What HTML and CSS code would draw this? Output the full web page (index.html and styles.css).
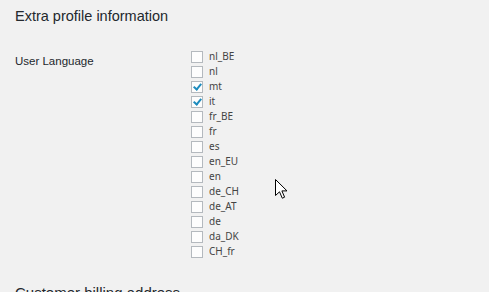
FILE: index.html
```html
<!DOCTYPE html>
<html>
<head>
  <title>Profile</title>
  <link rel="stylesheet" href="styles.css">
</head>
<body>
  <h2>Extra profile information</h2>
  <div class="form-row">
    <div class="label">User Language</div>
    <div class="choices">
      <label><span class="box"></span>nl_BE</label>
      <label><span class="box"></span>nl</label>
      <label><span class="box checked"></span>mt</label>
      <label><span class="box checked"></span>it</label>
      <label><span class="box"></span>fr_BE</label>
      <label><span class="box"></span>fr</label>
      <label><span class="box"></span>es</label>
      <label><span class="box"></span>en_EU</label>
      <label><span class="box"></span>en</label>
      <label><span class="box"></span>de_CH</label>
      <label><span class="box"></span>de_AT</label>
      <label><span class="box"></span>de</label>
      <label><span class="box"></span>da_DK</label>
      <label><span class="box"></span>CH_fr</label>
    </div>
  </div>
  <h2 class="next">Customer billing address</h2>
  <svg class="cursor" width="14" height="22" viewBox="0 0 14 22">
    <path d="M1.5 1.5 L1.5 17.5 L5.5 13.8 L8.3 20.2 L10.6 19.2 L7.9 12.9 L13 12.9 Z" fill="#fff" stroke="#000" stroke-width="1" stroke-linejoin="miter"/>
  </svg>
</body>
</html>
```

FILE: styles.css
```css
body {
  margin: 0;
  padding: 0 15px;
  background: #f1f1f1;
  font-family: 'Liberation Sans', Arial, sans-serif;
  color: #23282d;
  font-size: 13px;
}
h2 {
  font-weight: normal;
  font-size: 14.5px;
  line-height: 20px;
  margin: 6px 0 0;
}
.form-row {
  display: flex;
  margin-top: 23px;
}
.label {
  width: 176px;
  flex: none;
  padding-top: 3px;
  font-size: 11.5px;
  line-height: 18px;
}
.choices {
  display: flex;
  flex-direction: column;
  font-family: 'Noto Sans', sans-serif;
  font-size: 10px;
  color: #444;
}
.choices label {
  display: flex;
  align-items: center;
  height: 15px;
  line-height: 15px;
}
.box {
  width: 10px;
  height: 10px;
  border: 1px solid #b4b9be;
  background: #fdfdfd;
  margin-right: 6px;
  position: relative;
}
.box.checked::after {
  content: '';
  position: absolute;
  left: 3px;
  top: 0px;
  width: 3px;
  height: 6px;
  border: solid #1e8cbe;
  border-width: 0 2px 2px 0;
  transform: rotate(40deg);
}
.next {
  margin-top: 24px;
  font-size: 15px;
}
.cursor {
  position: absolute;
  left: 274px;
  top: 178px;
}
```
